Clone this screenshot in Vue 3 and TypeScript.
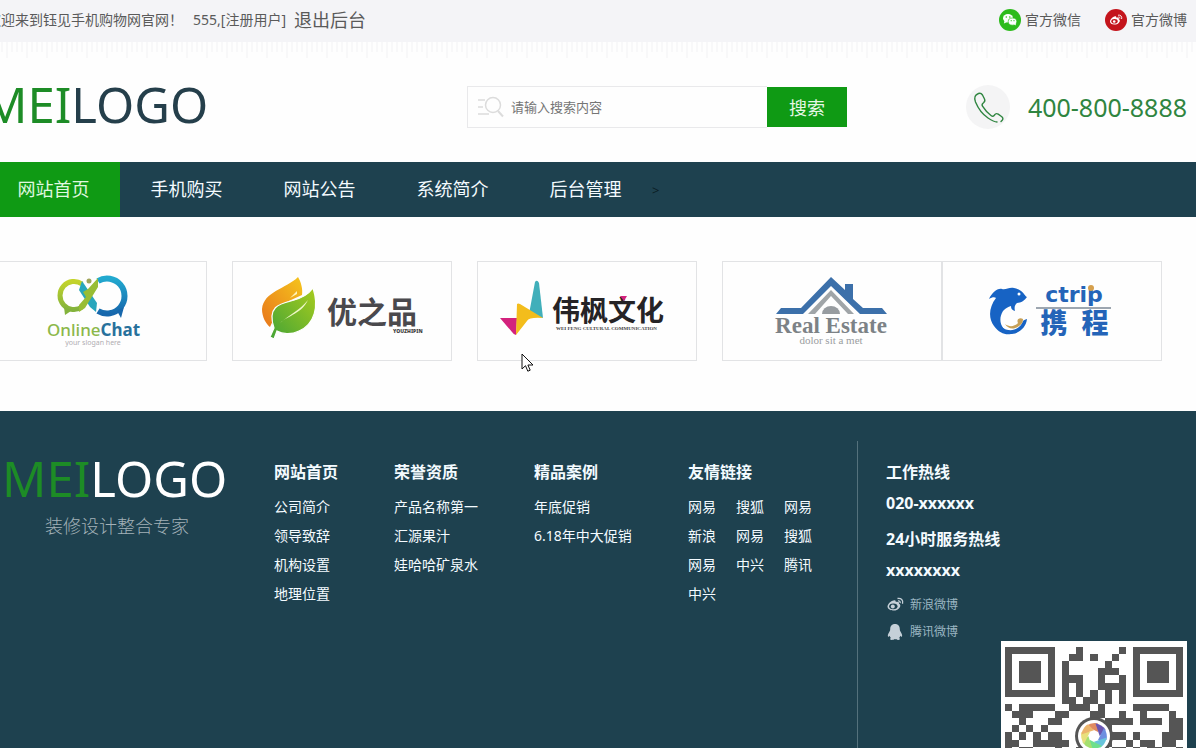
<script setup lang="ts">
interface LinkColumn {
  title: string
  kind: string
  links: string[]
}

const navItems: string[] = ['网站首页', '手机购买', '网站公告', '系统简介', '后台管理']

const columns: LinkColumn[] = [
  { title: '网站首页', kind: 'about', links: ['公司简介', '领导致辞', '机构设置', '地理位置'] },
  { title: '荣誉资质', kind: 'honor', links: ['产品名称第一', '汇源果汁', '娃哈哈矿泉水'] },
  { title: '精品案例', kind: 'cases', links: ['年底促销', '6.18年中大促销'] },
  {
    title: '友情链接',
    kind: 'friends',
    links: ['网易', '搜狐', '网易', '新浪', '网易', '搜狐', '网易', '中兴', '腾讯', '中兴'],
  },
]

const qrRows: string[] = [
  '1111111000100000101111111',
  '1000001001101001001000001',
  '1011101010000010001011101',
  '1011101010000111001011101',
  '1011101011100100101011101',
  '1000001010100111101000001',
  '1111111010101010101111111',
  '0000000011011010100000000',
  '1011111001110100001111100',
  '0111000110001100100100010',
  '0010001100000011110111011',
  '0101010000000110000000011',
  '1010101100000001101000111',
  '1100111110000010010110110',
  '1011000100110001101011001',
  '0110011010000011010011110',
  '1001101101100010111110010',
  '0000000010110110100010110',
  '1111111011001010101011001',
  '1000001001101001100010110',
  '1011101010010110111111011',
  '1011101011001011010010110',
  '1011101000110101101101001',
  '1000001011010010010110110',
  '1111111010101101101001011',
]
const qrPath: string = qrRows
  .map((row, y) => [...row].map((cell, x) => (cell === '1' ? `M${x} ${y}h1v1h-1z` : '')).join(''))
  .join('')

const blades: { color: string; angle: number }[] = [
  { color: '#e08a62', angle: 0 },
  { color: '#6a55b0', angle: 45 },
  { color: '#6d8fe0', angle: 90 },
  { color: '#68c4dc', angle: 135 },
  { color: '#6ee08c', angle: 180 },
  { color: '#a5e070', angle: 225 },
  { color: '#e8e07c', angle: 270 },
  { color: '#ecb56c', angle: 315 },
]
</script>

<template>
  <div class="page">
    <div class="topbar">
      <div class="container topbar-row">
        <p class="welcome">欢迎来到钰见手机购物网官网！</p>
        <span class="user">555,[注册用户]</span>
        <a class="logout" href="#">退出后台</a>
        <div class="follow">
          <a href="#">
            <svg width="22" height="22" viewBox="0 0 22 22" aria-hidden="true">
              <circle cx="11" cy="11" r="11" fill="#2dbb1c" />
              <ellipse cx="9" cy="9.3" rx="5" ry="4.2" fill="#fff" />
              <path d="M5.5 12l-.6 2.5 2.8-1.3z" fill="#fff" />
              <ellipse cx="13.5" cy="12.6" rx="4.3" ry="3.6" fill="#fff" stroke="#2dbb1c" stroke-width=".7" />
              <path d="M15 15.3l1.9 1.1-.4-2.1z" fill="#fff" />
              <g fill="#2dbb1c"><circle cx="7.3" cy="8" r=".8" /><circle cx="10.8" cy="8" r=".8" /><circle cx="12.2" cy="11.7" r=".6" /><circle cx="15" cy="11.7" r=".6" /></g>
            </svg>
            官方微信
          </a>
          <a href="#">
            <svg width="22" height="22" viewBox="0 0 22 22" aria-hidden="true">
              <circle cx="11" cy="11" r="11" fill="#c4141c" />
              <path d="M9.5 7.5c1.3-.5 2 .2 1.7 1.3 1.8-.6 3 .1 2.6 1.4 1.2.5 1.3 1.5.8 2.5-1 2-3.2 3-5.5 2.9C6.8 15.5 5 14.4 5 12.5c0-2 2.4-4.4 4.5-5z" fill="#fff" />
              <ellipse cx="9.5" cy="12.3" rx="3.2" ry="2.3" fill="#c4141c" />
              <circle cx="9.2" cy="12.5" r="1.3" fill="#fff" />
              <path d="M13 6.2c2.6-.5 4.3 1.3 3.6 3.8M13.3 8c1.2-.2 1.9.5 1.6 1.6" fill="none" stroke="#fff" stroke-width=".9" />
            </svg>
            官方微博
          </a>
        </div>
      </div>
    </div>

    <header class="header">
      <div class="container header-row">
        <a class="logo" href="#"><span>MEI</span>LOGO</a>
        <form class="search" @submit.prevent>
          <label class="search-field">
            <svg width="27" height="22" viewBox="0 0 27 22" fill="none" stroke="#dcdcdc" stroke-width="1.5" aria-label="搜索">
              <path d="M0 4h7M0 11h5M0 18h11" />
              <circle cx="15" cy="9" r="7.5" />
              <path d="M20 15l5 5.500" stroke-width="2" />
            </svg>
            <input type="text" placeholder="请输入搜索内容" />
          </label>
          <button type="submit">搜索</button>
        </form>
        <div class="phone">
          <svg width="44" height="44" viewBox="0 0 44 44" aria-hidden="true">
            <circle cx="22" cy="22" r="22" fill="#f4f4f5" />
            <path d="M31 37c-3 0-6-2-9-4C16 29 12 23 9.500 17 8 13 8.500 10 12.500 8.500c2-.8 3 0 4 1.500l2 4c.8 1.600.3 2.700-1 3.700-1.700 1.200-1.900 2-1 3.500 2.200 3.600 5 6.700 8.500 9.300 1.500 1.100 2.500.9 3.500-.5 1-1.500 2.200-1.800 3.700-.8l3.300 2.300c1.600 1.200 1.800 2.400.7 3.700l-1.200 1.200" fill="none" stroke="#2f8540" stroke-width="1.4" stroke-linecap="round" />
          </svg>
          <span>400-800-8888</span>
        </div>
      </div>
    </header>

    <nav class="nav">
      <ul class="container nav-row">
        <li v-for="(item, i) in navItems" :key="item">
          <a href="#" :class="{ active: i === 0 }">{{ item }}</a>
        </li>
        <li class="arrow">&gt;</li>
      </ul>
    </nav>

    <main class="container partners">
      <a class="card" href="#">
        <svg viewBox="0 0 218 98">
          <defs>
            <linearGradient id="lime" x1="0" y1="0" x2="0" y2="1"><stop offset="0" stop-color="#c3d32b" /><stop offset="1" stop-color="#83b33c" /></linearGradient>
            <linearGradient id="sea" x1="0" y1="0" x2="0" y2="1"><stop offset="0" stop-color="#22a9cf" /><stop offset="1" stop-color="#1767ac" /></linearGradient>
          </defs>
          <path d="M94 22a14 14 0 1 0 0 23" fill="none" stroke="url(#lime)" stroke-width="5" />
          <path d="M76 45l1 8 6-4z" fill="#83b33c" />
          <path d="M110 19a17.500 17.500 0 1 1 0 30" fill="none" stroke="url(#sea)" stroke-width="6" />
          <path d="M129 49l4 7 3-11z" fill="#1767ac" />
          <path d="M94 19l15 22-1 9-6-5-11-17z" fill="#28a6bc" />
          <path d="M110 16v9L97 46l-6 4v-7l7-8-3-5 5-3z" fill="#98bd35" />
          <circle cx="101" cy="19" r="2.500" fill="#a0a45a" />
          <text x="59" y="74" class="chat"><tspan fill="#8cb84a">Online</tspan><tspan fill="#28719c" font-weight="700">Chat</tspan></text>
          <text x="105" y="83" text-anchor="middle" class="slogan-small">your slogan here</text>
        </svg>
      </a>
      <a class="card" href="#">
        <svg viewBox="0 0 218 98">
          <defs>
            <linearGradient id="orange" x1="1" y1="0" x2="0" y2="1"><stop offset="0" stop-color="#f5c51c" /><stop offset="1" stop-color="#e8761c" /></linearGradient>
            <linearGradient id="green" x1="1" y1="0" x2="0" y2="1"><stop offset="0" stop-color="#a8cc1e" /><stop offset="1" stop-color="#43a336" /></linearGradient>
          </defs>
          <path d="M65 15C53 27 31 29 29 47c0 8 4 15 8 18l10-22 22-10c1-6-1-13-4-18z" fill="url(#orange)" />
          <path d="M80 26c6 18 2 36-14 43-8 4-17 3-22 0l-3 8-4-2 4-9C34 45 46 42 58 39c9-2 17-6 22-13z" fill="url(#green)" stroke="#fff" stroke-width="1.2" />
          <path d="M75 38C66 49 57 52 47 61c9-8 21-9 28-23z" fill="#eef7c8" />
          <path d="M64 29l-7 7 7-4z" fill="#fff3ba" />
          <text x="94" y="61" class="youzhi">优之品</text>
          <text x="160" y="71" class="youzhi-en">YOUZHIPIN</text>
        </svg>
      </a>
      <a class="card" href="#">
        <svg viewBox="0 0 218 98">
          <path d="M57 20q2-3 4 1l4 35-14-4z" fill="#41afba" />
          <path d="M22 56h17l-1 17q-2 0-4-3z" fill="#d3227d" />
          <path d="M39 42q1-1 3 0l23 14q-14-1-16 3L38 73z" fill="#f3bd1c" />
          <text x="74" y="59" class="weifeng">伟枫文化</text>
          <path d="M142 34h7l-3 5z" fill="#d3227d" />
          <text x="78" y="68" class="weifeng-en">WEI FENG CULTURAL COMMUNICATION</text>
        </svg>
      </a>
      <a class="card" href="#">
        <svg viewBox="0 0 218 98">
          <path d="M53 52l5-6h20l30-31 14 13v-6h8v15l10 9h19l5 6h-27L108 24 80 52z" fill="#3c70aa" />
          <path d="M85 52l23-24 23 24h-6L108 34 92 52z" fill="#a0a5a8" />
          <path d="M99 52a9 8 0 0 1 18 0z" fill="#979ca0" />
          <text x="108" y="71" text-anchor="middle" class="estate">Real Estate</text>
          <text x="108" y="82" text-anchor="middle" class="estate-sub">dolor sit a met</text>
        </svg>
      </a>
      <a class="card last" href="#">
        <svg viewBox="0 0 218 98">
          <path d="M84 35c-3-1-3-7-13-9-5-1-8 2-12 1-5-1-10 4-13 10 3-2 6-2 7-1-7 9-8 20-2 28 5 7 11 9 17 8-9-4-14-13-8-23 3-3 5-4 8-5 0 3 1 4 4 5-1-4 0-6 2-8 4 0 8-3 10-6z" fill="#1763c4" />
          <path d="M51 56c2 11 9 17 18 16 8-1 14-7 15-15-1 0-3 1-4 2-3 10-18 14-25 1z" fill="#1763c4" />
          <path d="M62 62c3 5 9 6 14 2 3-2 4-4 4-7-3-2-7 0-5 4-4 4-9 4-13 1z" fill="#c6a057" />
          <circle cx="76" cy="32" r="1.500" fill="#fff" />
          <text x="131" y="40" text-anchor="middle" class="ctrip">ctrip</text>
          <circle cx="148" cy="26" r="3" fill="#d6a04d" />
          <path d="M93 46h75" stroke="#7d8896" stroke-width="1.500" />
          <text x="111" y="71" text-anchor="middle" class="ctrip-cn">携</text>
          <text x="152" y="71" text-anchor="middle" class="ctrip-cn">程</text>
        </svg>
      </a>
      <svg class="cursor" width="13" height="20" viewBox="0 0 13 20" aria-hidden="true">
        <path d="M1 1v15l3.500-3.300 2.300 5.500 2.400-1-2.300-5.200H12z" fill="#fff" stroke="#111" />
      </svg>
    </main>

    <footer class="footer">
      <div class="footer-row">
        <div class="brand">
          <a class="logo" href="#"><span>MEI</span>LOGO</a>
          <p>装修设计整合专家</p>
        </div>
        <section v-for="col in columns" :key="col.title" :class="['links', col.kind]">
          <h3>{{ col.title }}</h3>
          <ul>
            <li v-for="(link, i) in col.links" :key="i"><a href="#">{{ link }}</a></li>
          </ul>
        </section>
        <section class="contact">
          <h3>工作热线</h3>
          <p>020-xxxxxx</p>
          <h3 class="second">24小时服务热线</h3>
          <p>xxxxxxxx</p>
          <ul class="social">
            <li>
              <a href="#">
                <svg width="18" height="18" viewBox="0 0 18 18" aria-hidden="true">
                  <path d="M7.500 4.500c1.700-.6 2.600.2 2.200 1.600 2.300-.8 3.800.1 3.300 1.700 1.400.6 1.600 1.900 1 3.100-1.200 2.500-4 3.800-7 3.700-3-.2-5.500-1.600-5.500-4 0-2.500 3.200-5.500 6-6.100z" fill="#c5d0d8" />
                  <ellipse cx="7.300" cy="10.300" rx="4.200" ry="2.900" fill="#1e414f" />
                  <circle cx="6.800" cy="10.500" r="2" fill="#c5d0d8" />
                  <path d="M11.500 2.500c3.600-.7 6 1.800 5 5.200M12 4.900c1.600-.3 2.500.7 2.100 2.200" fill="none" stroke="#c5d0d8" stroke-width="1.3" />
                </svg>
                新浪微博
              </a>
            </li>
            <li>
              <a href="#">
                <svg width="18" height="18" viewBox="0 0 18 18" aria-hidden="true">
                  <path d="M9 1c3.200 0 4.800 2.200 4.800 5.200 0 1 .2 1.700.8 2.600 1.300 2 1.900 3.700 1.400 4.800-.5.600-1.200-.2-1.700-.8-.2.800-.6 1.500-1.200 2.100 1.400.7 1 2-.9 2-1.500 0-2.600-.4-3.200-.9-.6.500-1.700.9-3.200.9-1.900 0-2.300-1.300-.9-2-.6-.6-1-1.300-1.200-2.100-.5.600-1.200 1.400-1.700.8-.5-1.100.1-2.800 1.400-4.800.6-.9.800-1.600.8-2.600C4.200 3.200 5.800 1 9 1z" fill="#c5d0d8" />
                </svg>
                腾讯微博
              </a>
            </li>
          </ul>
          <svg class="qr" viewBox="0 0 186 186" role="img" aria-label="二维码">
            <rect width="186" height="186" fill="#fff" />
            <g transform="translate(4 6) scale(7.12)"><path :d="qrPath" fill="#555" shape-rendering="crispEdges" /></g>
            <circle cx="93" cy="95" r="19" fill="#555" />
            <circle cx="93" cy="95" r="16" fill="#fff" />
            <g transform="translate(93 95)">
              <path v-for="b in blades" :key="b.angle" d="M-8 -10Q-2 -14 4 -12.500L4 -4z" :fill="b.color" :transform="`rotate(${b.angle})`" />
            </g>
          </svg>
        </section>
      </div>
    </footer>
  </div>
</template>

<style>
body {
  margin: 0;
}
</style>

<style scoped>
.page {
  display: flex;
  flex-direction: column;
  height: 100vh;
  overflow: hidden;
  background: #fefefe;
  color: #5a5a5a;
  font-family: "Noto Sans", "Noto Sans CJK SC", sans-serif;
  font-size: 14px;
}
a {
  color: inherit;
  text-decoration: none;
}
ul,
p,
h3 {
  margin: 0;
  padding: 0;
  list-style: none;
}
.container {
  margin: 0 9px 0 -13px;
}
.topbar {
  flex: none;
  background: #f4f4f7;
}
.topbar-row {
  display: flex;
  align-items: center;
  height: 42px;
  line-height: 40px;
  padding-bottom: 2px;
  box-sizing: border-box;
  white-space: nowrap;
}
.user {
  margin-left: 10px;
}
.logout {
  margin-left: 8px;
  font-size: 18px;
}
.follow {
  display: flex;
  gap: 24px;
  margin-left: auto;
}
.follow a {
  display: flex;
  align-items: center;
  gap: 4px;
}
.header {
  flex: none;
  background:
    repeating-linear-gradient(90deg, transparent 0 6px, #f8f8f9 6px 8px, transparent 8px 20px) 0 0 / 100% 16px no-repeat,
    repeating-linear-gradient(90deg, transparent 0 1px, #f8f8f9 1px 3px, transparent 3px 5px) 0 0 / 100% 10px no-repeat;
}
.header-row {
  display: flex;
  align-items: center;
  height: 120px;
  padding-top: 10px;
  box-sizing: border-box;
}
.logo {
  display: block;
  color: #253f4b;
  font-size: 49px;
  line-height: 60px;
}
.logo span {
  color: #1d8c26;
}
.header .logo {
  width: 484px;
  margin: -6px 0 0 -4px;
}
.search {
  display: flex;
  width: 380px;
  height: 42px;
}
.search-field {
  display: flex;
  flex: 1;
  align-items: center;
  gap: 6px;
  min-width: 0;
  padding-left: 10px;
  border: 1px solid #e9e9eb;
  border-right: 0;
}
.search input {
  flex: 1;
  min-width: 0;
  padding: 0;
  border: 0;
  outline: 0;
  background: transparent;
  color: #555;
  font: inherit;
  font-size: 13px;
}
.search input::placeholder {
  color: #757575;
  opacity: 1;
}
.search button {
  width: 80px;
  margin: 1px 0;
  padding: 0;
  border: 0;
  background: #0f9a14;
  color: #e6f7e6;
  font: inherit;
  font-size: 18px;
}
.phone {
  display: flex;
  align-items: center;
  gap: 18px;
  margin-left: auto;
  color: #2f8540;
  font-size: 25px;
  line-height: 44px;
}
.nav {
  flex: none;
  background: #1e414f;
}
.nav-row {
  display: flex;
  height: 55px;
  color: #f4fbff;
  font-size: 18px;
  line-height: 54px;
}
.nav-row a {
  display: block;
  width: 133px;
  height: 55px;
  text-align: center;
}
.nav-row .active {
  background: #0f9a14;
  color: #e0f8e0;
}
.arrow {
  color: #0b1d24;
  font-size: 13px;
  line-height: 56px;
}
.partners {
  position: relative;
  display: flex;
  flex: none;
  gap: 25px;
  padding: 44px 0 50px;
}
.card {
  width: 218px;
  height: 98px;
  border: 1px solid #e2e3e5;
}
.card.last {
  margin-left: -25px;
}
.card svg {
  display: block;
  width: 100%;
  height: 100%;
}
.chat {
  font-family: "Noto Sans", sans-serif;
  font-size: 17px;
  font-weight: 500;
}
.slogan-small {
  fill: #b0adb2;
  font-size: 7px;
}
.youzhi {
  fill: #4a494d;
  font-family: "Noto Sans CJK SC", sans-serif;
  font-size: 30px;
  font-weight: 700;
}
.youzhi-en {
  fill: #444;
  font-size: 5px;
  font-weight: 900;
}
.weifeng {
  fill: #252326;
  font-family: "Noto Sans CJK SC", sans-serif;
  font-size: 28px;
  font-weight: 700;
}
.weifeng-en {
  fill: #444;
  font-family: "Liberation Serif", serif;
  font-size: 5px;
  font-weight: 700;
}
.estate {
  fill: #7c8286;
  font-family: "Liberation Serif", serif;
  font-size: 23px;
  font-weight: 700;
}
.estate-sub {
  fill: #9a9da0;
  font-family: "Liberation Serif", serif;
  font-size: 11px;
}
.ctrip {
  fill: #2464b8;
  font-family: "DejaVu Sans", sans-serif;
  font-size: 22px;
  font-weight: 700;
}
.ctrip-cn {
  fill: #2464b8;
  font-family: "Noto Sans CJK SC", sans-serif;
  font-size: 27px;
  font-weight: 900;
}
.cursor {
  position: absolute;
  top: 136px;
  left: 534px;
}
.footer {
  flex: 1;
  min-height: 0;
  background: #1e414f;
  color: #f4fbff;
}
.footer-row {
  display: grid;
  grid-template-columns: 272px 120px 140px 154px 169px 1fr;
  padding: 30px 9px 0 2px;
}
.brand {
  padding-top: 7px;
}
.brand .logo {
  color: #fff;
}
.brand p {
  padding-left: 43px;
  color: #a3b1b8;
  font-size: 18px;
  font-weight: 300;
  line-height: 36px;
}
h3,
.contact p {
  font-size: 16px;
  font-weight: 700;
  line-height: 31px;
}
.links {
  padding-top: 16px;
}
.links ul {
  margin-top: 4px;
  line-height: 29px;
}
.friends ul {
  display: grid;
  grid-template-columns: repeat(3, 28px);
  column-gap: 20px;
}
.contact {
  padding: 16px 0 0 28px;
  border-left: 1px solid #54717c;
}
.contact .second {
  margin-top: 5px;
}
.social {
  display: grid;
  gap: 9px;
  margin-top: 10px;
  color: #9bb6c2;
  font-size: 12px;
  line-height: 18px;
}
.social a {
  display: flex;
  gap: 6px;
}
.qr {
  display: block;
  width: 186px;
  height: 186px;
  margin-left: auto;
}
</style>
